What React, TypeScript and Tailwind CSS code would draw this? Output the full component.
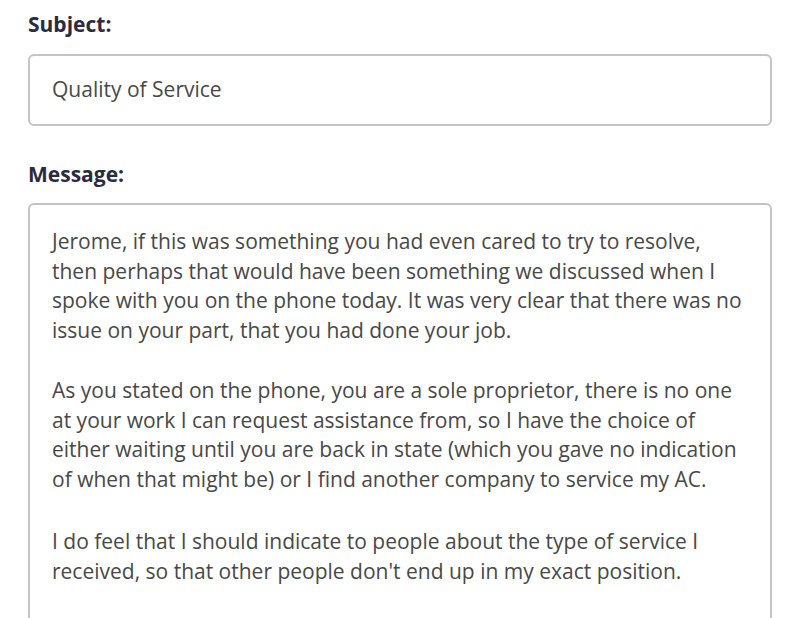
const paragraphs: string[][] = [
  [
    'Jerome, if this was something you had even cared to try to resolve,',
    'then perhaps that would have been something we discussed when I',
    'spoke with you on the phone today. It was very clear that there was no',
    'issue on your part, that you had done your job.',
  ],
  [
    'As you stated on the phone, you are a sole proprietor, there is no one',
    'at your work I can request assistance from, so I have the choice of',
    'either waiting until you are back in state (which you gave no indication',
    'of when that might be) or I find another company to service my AC.',
  ],
  [
    'I do feel that I should indicate to people about the type of service I',
    "received, so that other people don't end up in my exact position.",
  ],
]

export default function App() {
  return (
    <div
      className="h-[618px] w-[790px] overflow-hidden bg-white px-[28px] pt-[10px]"
      style={{ fontFamily: '"Open Sans", "Noto Sans", sans-serif' }}
    >
      <label className="block text-[21px] font-bold leading-[28px] text-[#2b2b40]">Subject:</label>
      <div className="mt-[16px] flex h-[72px] w-[744px] items-center rounded-[6px] border-2 border-[#c4c4c4] px-[22px] text-[21px] text-[#484848]">
        Quality of Service
      </div>

      <label className="mt-[34px] block text-[21px] font-bold leading-[28px] text-[#2b2b40]">Message:</label>
      <div className="mt-[15px] h-[460px] w-[744px] rounded-[6px] border-2 border-[#c4c4c4] px-[22px] pt-[22px] text-[21px] leading-[29.5px] text-[#484848]">
        {paragraphs.map((lines, i) => (
          <p key={i} className={i === 1 ? 'mt-[31px]' : i === 2 ? 'mt-[33px]' : ''}>
            {lines.map((line, j) => (
              <span key={j} className="block whitespace-nowrap">
                {line}
              </span>
            ))}
          </p>
        ))}
      </div>
    </div>
  )
}
